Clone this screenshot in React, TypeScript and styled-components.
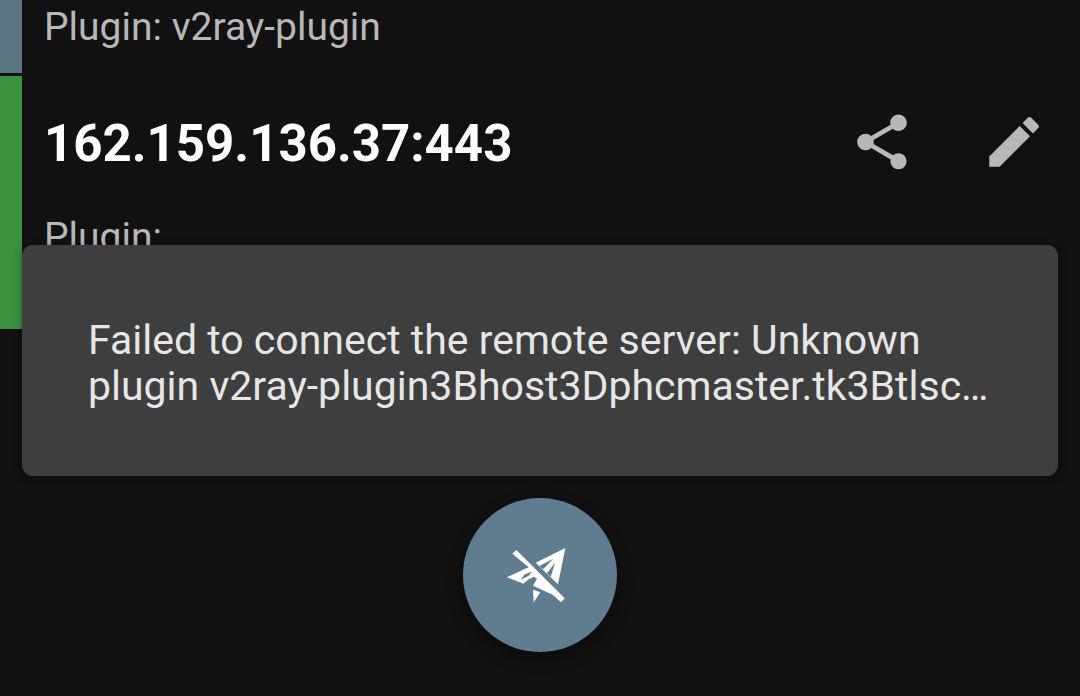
import React from "react";
import styled, { createGlobalStyle } from "styled-components";
import { MdEdit, MdShare } from "react-icons/md";

const GlobalStyle = createGlobalStyle`
  *, *::before, *::after { box-sizing: border-box; }
  body {
    margin: 0;
    background: #111111;
    color: #ffffff;
    font-family: Roboto, "Liberation Sans", sans-serif;
  }
`;

const Page = styled.main`
  position: relative;
  min-height: 100vh;
  overflow: hidden;
  background: #111111;
`;

const ProfileList = styled.ul`
  display: flex;
  flex-direction: column;
  gap: 3px;
  margin: 0;
  padding: 0;
  list-style: none;
`;

const ProfileRow = styled.li<{ $accent: string }>`
  display: flex;
  flex-direction: column;
  padding-left: 22px;
  border-left: 22px solid ${(p) => p.$accent};
`;

const ProfileHeader = styled.div`
  display: flex;
  align-items: center;
  height: 132px;
`;

const ProfileName = styled.h2`
  flex: 1;
  margin: 0;
  padding-top: 4px;
  font-size: 51px;
  line-height: 60px;
  font-weight: 700;
`;

const IconButton = styled.button`
  display: flex;
  align-items: center;
  justify-content: center;
  width: 132px;
  height: 132px;
  padding: 0;
  border: 0;
  background: none;
  color: #b8b8b8;
  cursor: pointer;
`;

const PluginText = styled.p<{ $spaced?: boolean }>`
  margin: 0;
  padding: ${(p) => (p.$spaced ? "6px 0 69px" : "4px 0 23px")};
  color: #b8b8b8;
  font-size: 39px;
  line-height: 46px;
`;

const BottomStack = styled.div`
  position: absolute;
  left: 0;
  right: 0;
  bottom: 0;
  display: flex;
  flex-direction: column;
  align-items: center;
  gap: 22px;
  padding: 0 22px 44px;
`;

const Snackbar = styled.div`
  width: 100%;
  padding: 72px 66px 67px;
  border-radius: 11px;
  background: #3e3e3e;
  box-shadow: 0 2px 8px rgba(0, 0, 0, 0.4);
`;

const SnackbarText = styled.p`
  display: -webkit-box;
  margin: 0;
  overflow: hidden;
  -webkit-box-orient: vertical;
  -webkit-line-clamp: 2;
  color: #e6e6e6;
  font-size: 41px;
  line-height: 46px;
`;

const ConnectButton = styled.button`
  display: flex;
  align-items: center;
  justify-content: center;
  width: 154px;
  height: 154px;
  padding: 0;
  border: 0;
  border-radius: 50%;
  background: #607d8f;
  color: #ffffff;
  box-shadow: 0 6px 16px rgba(0, 0, 0, 0.4);
  cursor: pointer;
`;

function PlaneOffIcon() {
  return (
    <svg width="100" height="90" viewBox="0 0 300 270" fill="currentColor" aria-hidden="true">
      <path d="M79 60 L224 205 L213 217 L188 194 L129 167 L141 146 L132 140 L116 148 L100 161 L88 156 L50 142 L116 112 L67 71 Z" />
      <path d="M226 54 L204 163 L191 151 L137 98 Z" />
      <path d="M129 179 L151 187 L131 217 Z" />
      <path d="M92 149 L104 133 L127 125 L115 138 Z" fill="#607d8f" />
      <path d="M148 108 L190 86 L159 118 Z M171 130 L195 98 L182 141 Z" fill="#607d8f" />
    </svg>
  );
}

export default function App() {
  return (
    <>
      <GlobalStyle />
      <Page>
        <ProfileList>
          <ProfileRow $accent="#5b7484">
            <PluginText>Plugin: v2ray-plugin</PluginText>
          </ProfileRow>
          <ProfileRow $accent="#3a913f">
            <ProfileHeader>
              <ProfileName>162.159.136.37:443</ProfileName>
              <IconButton type="button" aria-label="Share">
                <MdShare size={66} />
              </IconButton>
              <IconButton type="button" aria-label="Edit">
                <MdEdit size={66} />
              </IconButton>
            </ProfileHeader>
            <PluginText $spaced>Plugin:</PluginText>
          </ProfileRow>
        </ProfileList>
        <BottomStack>
          <Snackbar role="status">
            <SnackbarText>
              Failed to connect the remote server: Unknown plugin v2ray-plugin3Bhost3Dphcmaster.tk3Btlsc…
            </SnackbarText>
          </Snackbar>
          <ConnectButton type="button" aria-label="Connect">
            <PlaneOffIcon />
          </ConnectButton>
        </BottomStack>
      </Page>
    </>
  );
}
